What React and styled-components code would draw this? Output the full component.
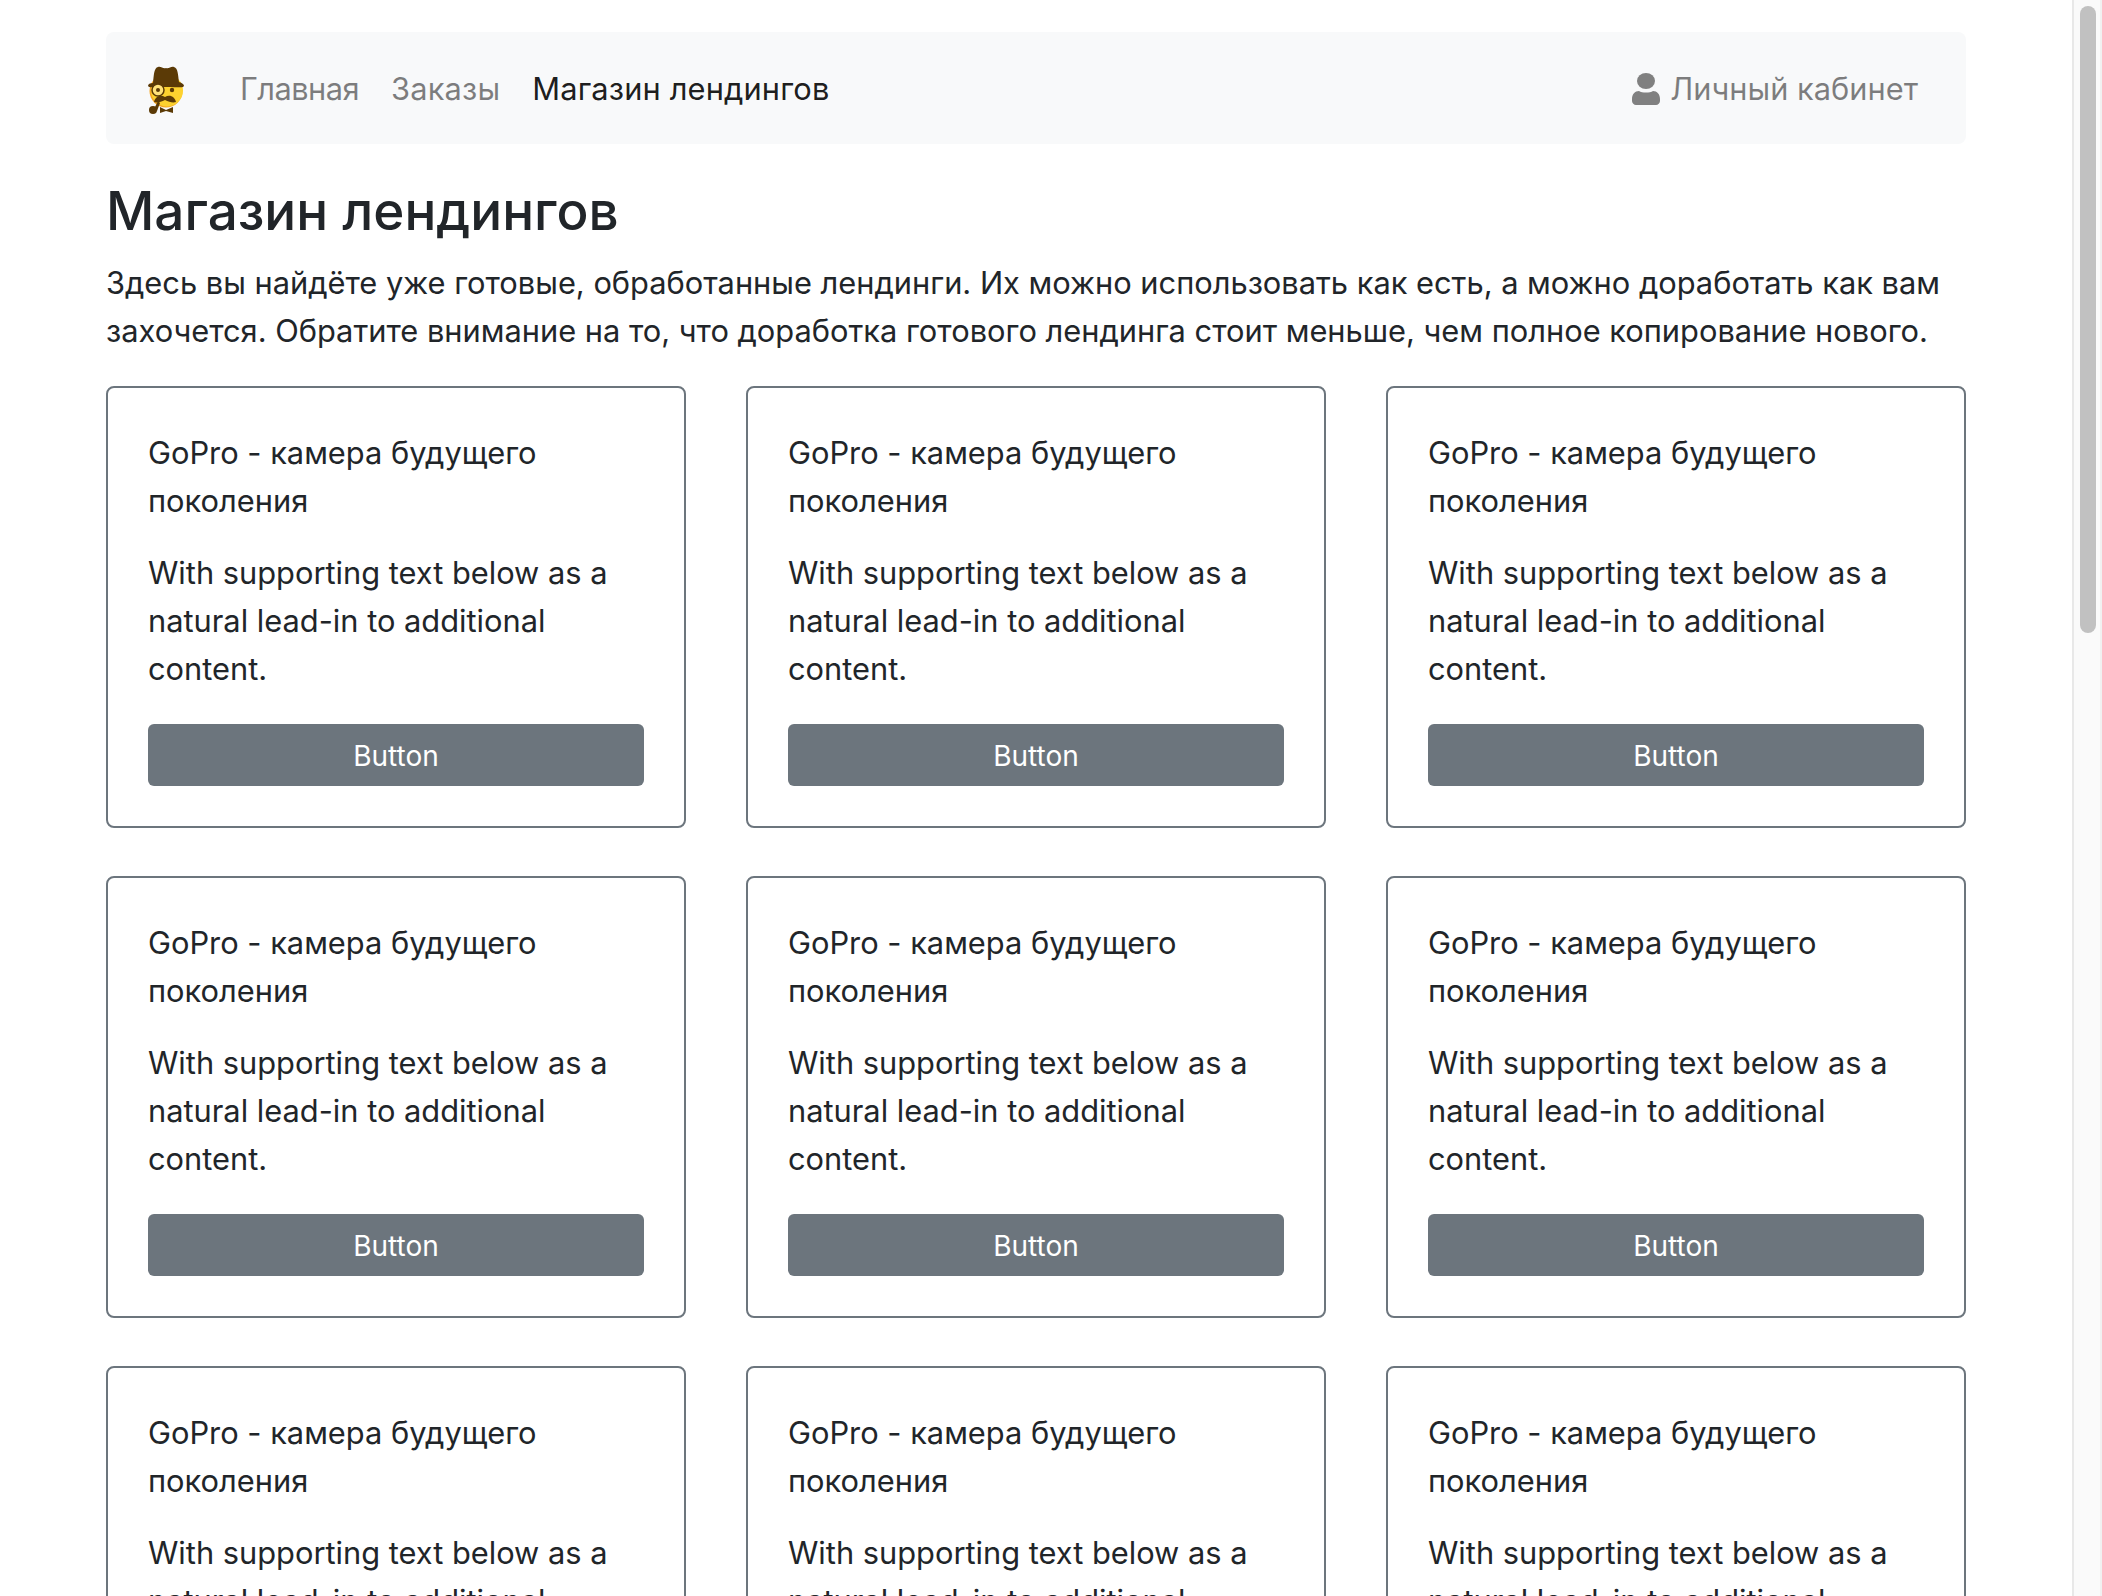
import React from "react";
import styled, { createGlobalStyle } from "styled-components";

const GlobalStyle = createGlobalStyle`
  html { scrollbar-width: none; }
  html::-webkit-scrollbar { display: none; }
  body {
    margin: 0;
    background: #fff;
    color: #212529;
    font-family: Inter, "Liberation Sans", sans-serif;
    font-size: 30.8px;
    line-height: 48px;
  }
`;

const Page = styled.div`
  width: 2072px;
`;

const Container = styled.div`
  width: 1860px;
  margin: 0 auto;
  padding: 32px 0 240px;
`;

// scrollbar of the window, drawn since the headless browser hides the real one
const ScrollTrack = styled.div`
  position: fixed;
  top: 0;
  right: 0;
  bottom: 0;
  width: 30px;
  box-sizing: border-box;
  background: #fafafa;
  border-left: 2px solid #e8e8e8;
  border-right: 2px solid #f1f1f1;
`;

const ScrollThumb = styled.div`
  margin: 6px 0 0 6px;
  width: 16px;
  height: 627px;
  border-radius: 8px;
  background: #c1c1c1;
`;

const Navbar = styled.nav`
  display: flex;
  align-items: center;
  height: 112px;
  box-sizing: border-box;
  padding: 2px 48px 0 40px;
  background: #f8f9fa;
  border-radius: 8px;
`;

const NavLink = styled.a`
  color: ${(p) => (p.$active ? "rgba(0,0,0,.9)" : "rgba(0,0,0,.5)")};
  letter-spacing: ${(p) => p.$spacing || 0}px;
  margin-right: 32px;
`;

const Logo = styled.svg`
  flex: none;
  width: 40px;
  height: 52px;
  margin: -2px 54px 0 0;
`;

const Account = styled.a`
  display: flex;
  align-items: center;
  gap: 10px;
  margin-left: auto;
  color: rgba(0, 0, 0, 0.5);
`;

const Title = styled.h1`
  margin: 35px 0 16px;
  font-size: 53px;
  font-weight: 500;
  line-height: 64px;
`;

const Lead = styled.p`
  margin: 0 0 31px;
`;

const Grid = styled.div`
  display: grid;
  grid-template-columns: repeat(3, 580px);
  justify-content: space-between;
  row-gap: 48px;
`;

const Card = styled.div`
  border: 2px solid #6c757d;
  border-radius: 8px;
  padding: 41px 40px 40px;
  height: 442px;
  box-sizing: border-box;
`;

const CardTitle = styled.div`
  margin-bottom: 24px;
`;

const CardText = styled.p`
  margin: 0 0 31px;
`;

const Button = styled.button`
  display: block;
  width: 100%;
  height: 62px;
  border: 0;
  border-radius: 6px;
  background: #6c757d;
  color: #fff;
  font-family: inherit;
  font-size: 28px;
  padding: 2px 0 0;
`;

const cards = Array.from({ length: 21 }, (_, i) => i);

function LogoIcon() {
  return (
    <Logo viewBox="0 0 40 52">
      <circle cx="20" cy="29" r="16.5" fill="#f5a623" />
      <circle cx="21" cy="28.5" r="16" fill="#fdd22f" />
      <path d="M7 21 C8 12 8 6 12 5 C15 4 17 7 20 6 C23 7 25 4 28 5 C32 6 32 13 33 20 C36 21 38 22 38 24 C37 26 34 25 20 25 C6 25 3 26 2 24 C2 22 4 21 7 21Z" fill="#5b3a06" />
      <circle cx="12" cy="28" r="6" fill="#ffe27a" stroke="#5b3a06" strokeWidth="1.5" />
      <circle cx="12" cy="28" r="2" fill="#5b3a06" />
      <circle cx="26" cy="28" r="2.2" fill="#5b3a06" />
      <path d="M8 40 C9 35 14 32 19 35 C24 32 29 35 30 40 C27 41 23 40 19 38 C15 40 11 41 8 40Z" fill="#5b3a06" />
      <path d="M14 45 L20 48 L27 45 L27 51 L20 49 L14 51Z" fill="#5b3a06" />
      <path d="M12 39 L14 41 L11 49 L8 47Z" fill="#5b3a06" />
      <circle cx="7" cy="48" r="4" fill="#5b3a06" />
    </Logo>
  );
}

function UserIcon() {
  return (
    <svg width="28" height="32" viewBox="0 0 28 32">
      <ellipse cx="14" cy="8" rx="9" ry="8" fill="#808080" />
      <path d="M7 18 C10 20 18 20 21 18 C25 18 28 21 28 26 V28 C28 30 26 32 24 32 H4 C2 32 0 30 0 28 V26 C0 21 3 18 7 18Z" fill="#808080" />
    </svg>
  );
}

export default function App() {
  return (
    <Page>
      <GlobalStyle />
      <Container>
        <Navbar>
          <LogoIcon />
          <NavLink $spacing={-0.55}>Главная</NavLink>
          <NavLink $spacing={0.2}>Заказы</NavLink>
          <NavLink $active $spacing={0.15}>Магазин лендингов</NavLink>
          <Account>
            <UserIcon />
            Личный кабинет
          </Account>
        </Navbar>
        <Title>Магазин лендингов</Title>
        <Lead>
          Здесь вы найдёте уже готовые, обработанные лендинги. Их можно использовать как есть, а можно доработать как вам
          захочется. Обратите внимание на то, что доработка готового лендинга стоит меньше, чем полное копирование нового.
        </Lead>
        <Grid>
          {cards.map((i) => (
            <Card key={i}>
              <CardTitle>GoPro - камера будущего поколения</CardTitle>
              <CardText>With supporting text below as a natural lead-in to additional content.</CardText>
              <Button>Button</Button>
            </Card>
          ))}
        </Grid>
      </Container>
      <ScrollTrack>
        <ScrollThumb />
      </ScrollTrack>
    </Page>
  );
}
